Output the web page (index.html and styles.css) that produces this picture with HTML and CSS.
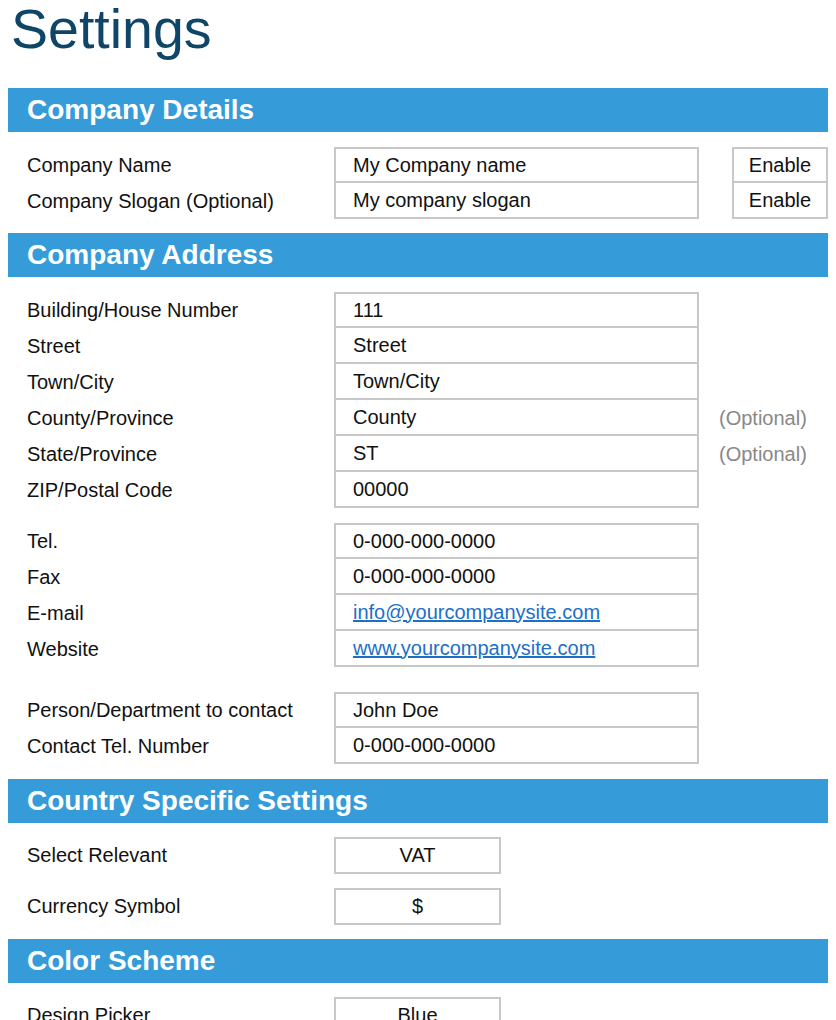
FILE: index.html
```html
<!DOCTYPE html>
<html lang="en">
<head>
    <meta charset="UTF-8">
    <meta name="viewport" content="width=device-width, initial-scale=1.0">
    <title>Settings</title>
    <link rel="stylesheet" href="styles.css">
</head>
<body>
    <div class="page">
        <h1>Settings</h1>

        <div class="section-title">Company Details</div>
        <div class="group">
            <div class="row">
                <div class="label">Company Name</div>
                <div class="field">My Company name</div>
                <div class="toggle">Enable</div>
            </div>
            <div class="row">
                <div class="label">Company Slogan (Optional)</div>
                <div class="field">My company slogan</div>
                <div class="toggle">Enable</div>
            </div>
        </div>

        <div class="section-title">Company Address</div>
        <div class="group">
            <div class="row">
                <div class="label">Building/House Number</div>
                <div class="field">111</div>
            </div>
            <div class="row">
                <div class="label">Street</div>
                <div class="field">Street</div>
            </div>
            <div class="row">
                <div class="label">Town/City</div>
                <div class="field">Town/City</div>
            </div>
            <div class="row">
                <div class="label">County/Province</div>
                <div class="field">County</div>
                <div class="note">(Optional)</div>
            </div>
            <div class="row">
                <div class="label">State/Province</div>
                <div class="field">ST</div>
                <div class="note">(Optional)</div>
            </div>
            <div class="row">
                <div class="label">ZIP/Postal Code</div>
                <div class="field">00000</div>
            </div>
        </div>
        <div class="group">
            <div class="row">
                <div class="label">Tel.</div>
                <div class="field">0-000-000-0000</div>
            </div>
            <div class="row">
                <div class="label">Fax</div>
                <div class="field">0-000-000-0000</div>
            </div>
            <div class="row">
                <div class="label">E-mail</div>
                <div class="field"><a href="#">info@yourcompanysite.com</a></div>
            </div>
            <div class="row">
                <div class="label">Website</div>
                <div class="field"><a href="#">www.yourcompanysite.com</a></div>
            </div>
        </div>
        <div class="group group-spaced">
            <div class="row">
                <div class="label">Person/Department to contact</div>
                <div class="field">John Doe</div>
            </div>
            <div class="row">
                <div class="label">Contact Tel. Number</div>
                <div class="field">0-000-000-0000</div>
            </div>
        </div>

        <div class="section-title">Country Specific Settings</div>
        <div class="choices">
            <div class="choice">
                <div class="label">Select Relevant</div>
                <div class="pick">VAT</div>
            </div>
            <div class="choice">
                <div class="label">Currency Symbol</div>
                <div class="pick">$</div>
            </div>
        </div>

        <div class="section-title">Color Scheme</div>
        <div class="choices">
            <div class="choice">
                <div class="label">Design Picker</div>
                <div class="pick">Blue</div>
            </div>
        </div>
    </div>
</body>
</html>
```

FILE: styles.css
```css
* {
    margin: 0;
    padding: 0;
    box-sizing: border-box;
}

body {
    background: white;
    font-family: "Liberation Sans", Arial, sans-serif;
    color: #111;
}

.page {
    padding: 0 8px;
}

h1 {
    font-size: 55.5px;
    font-weight: normal;
    line-height: 62px;
    color: #0f4566;
    margin: -2px 0 28px 3px;
}

.section-title {
    height: 44px;
    background: #359cd9;
    color: white;
    font-size: 28px;
    font-weight: bold;
    padding-left: 19px;
    display: flex;
    align-items: center;
}

.group {
    margin: 15px 0 14px;
}

.group + .group {
    margin-top: 15px;
}

.group + .group-spaced {
    margin-top: 25px;
    margin-bottom: 15px;
}

.row {
    display: flex;
    height: 36px;
    font-size: 20px;
}

.label {
    width: 326px;
    padding-left: 19px;
    display: flex;
    align-items: center;
}

.field {
    width: 365px;
    border: 2px solid #c8c8c8;
    border-top: none;
    padding-left: 17px;
    display: flex;
    align-items: center;
}

/* first row carries the top border of the stacked boxes */
.row:first-child .field {
    border-top: 2px solid #c8c8c8;
}

.field a {
    color: #1e6fc6;
}

.toggle {
    width: 96px;
    margin-left: 33px;
    border: 2px solid #c8c8c8;
    border-top: none;
    display: flex;
    align-items: center;
    justify-content: center;
}

.row:first-child .toggle {
    border-top: 2px solid #c8c8c8;
}

.note {
    margin-left: 20px;
    color: #888;
    display: flex;
    align-items: center;
}

.choices {
    display: flex;
    flex-direction: column;
    gap: 14px;
    margin: 14px 0;
}

.choice {
    display: flex;
    height: 37px;
    font-size: 20px;
}

.pick {
    width: 167px;
    border: 2px solid #c8c8c8;
    display: flex;
    align-items: center;
    justify-content: center;
}
```
